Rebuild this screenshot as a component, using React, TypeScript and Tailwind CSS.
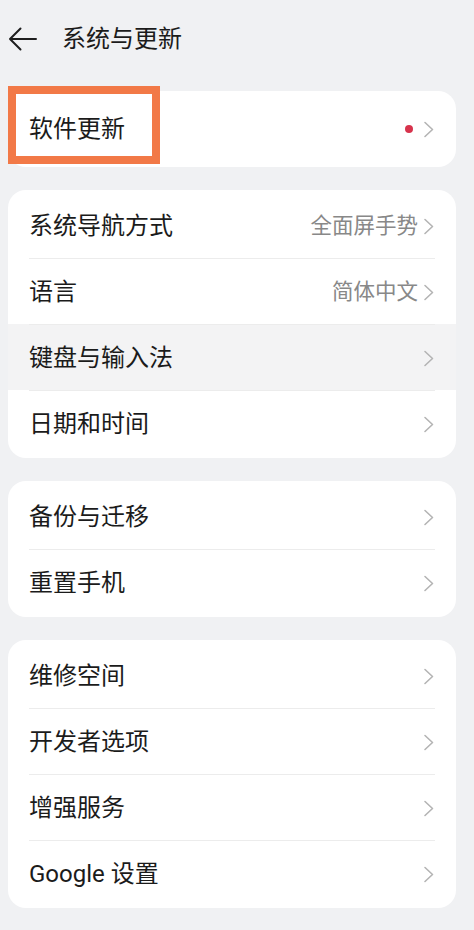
import React from "react";

const font = { fontFamily: 'Roboto, "Noto Sans CJK SC", "Noto Sans", sans-serif' };

function Chevron() {
  return (
    <svg width="12" height="17" viewBox="0 0 12 17" className="shrink-0">
      <path d="M2 1.5 L9.5 8.5 L2 15.5" fill="none" stroke="#b4b4b4" strokeWidth="1.6" strokeLinecap="round" strokeLinejoin="round" />
    </svg>
  );
}

type Item = { label: string; value?: string; highlight?: boolean };

function Row({ item, first }: { item: Item; first: boolean }) {
  return (
    <div className={`relative h-[66px] flex items-center pl-[21px] pr-[21px] pt-[2px] ${item.highlight ? "bg-[#f3f3f4]" : ""}`}>
      {!first && <div className="absolute top-0 left-[21px] right-[21px] h-px bg-[#ececec]" />}
      <div className="flex-1 text-[24px] text-[#1b1b1b] leading-none">{item.label}</div>
      {item.value && <div className="text-[21.5px] text-[#888888] leading-none mr-[5px]">{item.value}</div>}
      <Chevron />
    </div>
  );
}

function Card({ items }: { items: Item[] }) {
  return (
    <div className="bg-white rounded-[18px] py-[2px] overflow-hidden">
      {items.map((it, i) => (
        <Row key={it.label} item={it} first={i === 0} />
      ))}
    </div>
  );
}

export default function App() {
  return (
    <div className="w-[474px] h-[930px] bg-[#f0f1f3] overflow-hidden" style={font}>
      <div className="h-[78px] flex items-center pl-[8px]">
        <svg width="30" height="24" viewBox="0 0 30 24" className="shrink-0">
          <path d="M2 12 H28 M12.5 1.5 L2 12 L12.5 22.5" fill="none" stroke="#1e1e1e" strokeWidth="2" strokeLinecap="round" strokeLinejoin="round" />
        </svg>
        <div className="ml-[24px] text-[24px] text-[#1b1b1b] leading-none">系统与更新</div>
      </div>
      <div className="pl-[8px] pr-[18px] mt-[13px] flex flex-col gap-[23px]">
        <div className="relative bg-white rounded-[18px] h-[76px] flex items-center pl-[21px] pr-[21px]">
          <div className="flex-1 text-[24px] text-[#1b1b1b] leading-none">软件更新</div>
          <div className="w-[8px] h-[8px] rounded-full bg-[#d7334c] mr-[10px]" />
          <Chevron />
          <div className="absolute left-0 top-[-5px] w-[152px] h-[78px] border-[8px] border-[#f27947]" />
        </div>
        <Card
          items={[
            { label: "系统导航方式", value: "全面屏手势" },
            { label: "语言", value: "简体中文" },
            { label: "键盘与输入法", highlight: true },
            { label: "日期和时间" },
          ]}
        />
        <Card items={[{ label: "备份与迁移" }, { label: "重置手机" }]} />
        <Card
          items={[
            { label: "维修空间" },
            { label: "开发者选项" },
            { label: "增强服务" },
            { label: "Google 设置" },
          ]}
        />
      </div>
    </div>
  );
}
